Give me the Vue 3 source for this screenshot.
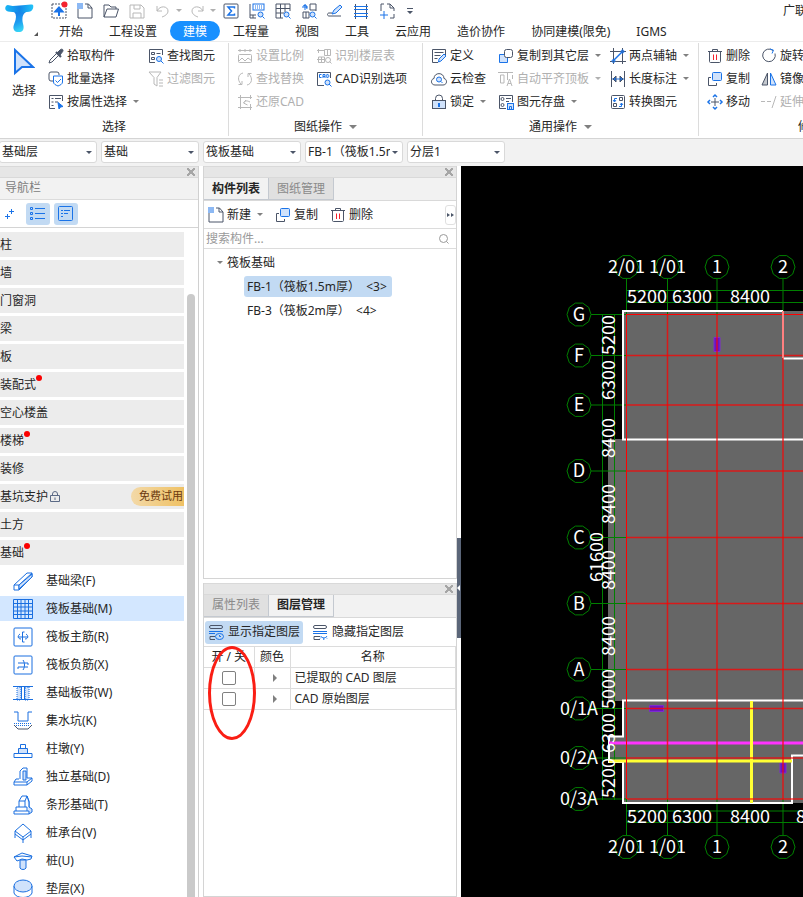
<script setup>
import { ref } from 'vue';

const D = '#4b5568';
const B = '#1a73e8';
const L = '#d0e2fb';

// 16 x 16 icons, stroked with the current colour unless a shape says otherwise
const icons = {
  upload: `<rect x="1" y="1" width="14" height="14" stroke-dasharray="2 1"/><path d="M8 13V6M4.500 8.500 8 4.500l3.500 4z" stroke="${B}" stroke-width="2" fill="${B}"/><circle cx="13.500" cy="1.500" r="3" fill="#f5222d" stroke="none"/>`,
  newFile: `<path d="M1 6v9h14V5l-3.500-4H8M11 1v4h4"/><path d="M.500 1h5M.500 3h5M.500 5h5" stroke="${B}" stroke-dasharray="1 1" stroke-width="2"/>`,
  open: `<path d="M1 14V2h5l2 2h5v2M1 14l3-8h11.500l-2.500 8z"/>`,
  save: `<path d="M1 15V2h11l3 3v10zM4 15v-5h8v5M5 2v4h6V2"/>`,
  undo: `<path d="M2 3v5h5M2 8c3-6 11-5 11 0 0 3-3 5-6 6"/>`,
  redo: `<path d="M14 3v5H9M14 8C11 2 3 3 3 8c0 3 3 5 6 6"/>`,
  sigma: `<rect x="1" y="1" width="14" height="14" rx="1"/><path d="M11.500 5.500V4H5l3.500 4L5 12h6.500v-1.500" stroke="${B}" stroke-width="1.500"/>`,
  lookupA: `<path d="M1 1v14h6M1 12h6M4 12v3"/><rect x="4" y="1" width="11" height="6" stroke="${B}"/><path d="M6 3h8M6 5h8" stroke="${B}" stroke-dasharray="1 1"/><circle cx="11.500" cy="11.500" r="2.500" stroke="${B}" fill="${L}"/><path d="m13.500 13.500 2 2" stroke="${B}"/>`,
  lookupB: `<path d="M1 1h14v7M1 1v14h7M1 5.500h14M1 10h8M5.500 1v14M10 1v8"/><circle cx="11.500" cy="11.500" r="2.500" stroke="${B}" fill="${L}"/><path d="m13.500 13.500 2 2" stroke="${B}"/>`,
  lookupC: `<path d="M9 1h6v7M9 1v6h6M2 9v6h6V9zM5 9v6"/><path d="M1 4h6M4 1v6M2 3l3-1 1 4" stroke="${B}"/><circle cx="11.500" cy="11.500" r="2.500" stroke="${B}" fill="${L}"/><path d="m13.500 13.500 2 2" stroke="${B}"/>`,
  pen: `<path d="M5 11 7 7l6-5 2 2-6 6z" stroke="${B}" fill="${L}"/><path d="M5 10H2c-2 0-2 3 0 3h12"/>`,
  beams: `<path d="M2.500 1v15M13.500 1v15"/><path d="M1 3.500h14M1 6.500h14M1 10.500h14M1 13.500h14" stroke="${B}"/>`,
  addFrame: `<path d="M2 8V1h3M8 1h3l4 4v3M15 11v4h-4M11 1v4h4"/><path d="M1 12h8M5 8v8" stroke="${B}"/>`,
  dropper: `<path d="m9 5 3-3c2-2 4 0 2.500 1.800L12 7" fill="${D}"/><path d="m8 4 5 5" stroke-width="2.200"/><path d="M9 5 2 12l-1 3 3-1 7-7"/>`,
  batch: `<path d="M5 10H3a2 2 0 0 1-2-2V3a2 2 0 0 1 2-2h6a2 2 0 0 1 2 2v1"/><path d="M5.500 5h9v6c0 2-2 3-4.500 4-2.500-1-4.500-2-4.500-4z" stroke="${B}" fill="#fff"/><path d="m7.500 9.500 2 2 3.500-3.500" stroke="${B}"/>`,
  byProp: `<path d="M7 14.500H1.500v-13h13V7"/><path d="M3.500 4.500h2M7 4.500h6M3.500 8h2M7 8h3M3.500 11.500h2"/><path d="m10 8.500 5 4-2.500.500-1.500 2z" fill="${B}" stroke="${B}"/>`,
  find: `<path d="M7 14.500H1.500v-13h13V7M3.500 4.500h3v2h-3zM3.500 9.500h3v2h-3zM8.500 5.500h4"/><circle cx="11" cy="11" r="2.500" stroke="${B}" fill="${L}"/><path d="m13 13 2.500 2.500" stroke="${B}"/>`,
  filter: `<path d="M1 1h12L9 6.500V15l-3-2V6.500zM11 9h4M11 12h4M11 15h4"/>`,
  ratio: `<path d="M1 2.500h14M3 1v3M13 1v3M8 1v3"/><rect x="1.500" y="6.500" width="13" height="8" rx="1"/><path d="m2 13 3-3 3 3 3-3 4 3"/>`,
  replace: `<path d="M6 2C1 3 0 9 4 13M1.500 13.500H5V10M10 14c5-1 6-7 2-11M14.500 2.500H11V6"/>`,
  restore: `<path d="M3.500 1v14M1 3.500h14M1 13.500h14M13.500 10v6M13.500 1v4M13 8C9 6 8 7 7 8.500M9 6 6.500 9l4 2"/>`,
  floorTable: `<path d="M2.500 1v4M1 2.500h7M2.500 9v5.500h6V9zM1 11.500h8M5.500 9v5M8.500 1.500v6h6v-6zM11.500 1v6"/><circle cx="12" cy="12" r="2.500"/><path d="m13.500 13.500 2 2"/>`,
  cadOpt: `<path d="M8 14.500H1.500v-13h13V7"/><path d="M5.500 3.500H3.500v3h2M7 7V3.500h2v3.500M7 5.500h2M10.800 3.500v3h1l1.200-1v-1l-1.200-1z" stroke="${B}"/><circle cx="11.500" cy="11.500" r="2.500" stroke="${B}" fill="${L}"/><path d="m13 13 2.500 2.500" stroke="${B}"/>`,
  define: `<path d="M14.500 7V1.500h-13v13H7M3.500 4.500h9M3.500 7.500h6M3.500 10.500h3"/><path d="m7.500 14 .500-3 5-5 2 2-5 5z" stroke="${B}" fill="${L}"/>`,
  cloud: `<path d="M4 14C-.500 14-.500 8 3 7.500 3 1 13 1 13 7.500c3.500.500 3.500 6.500-1 6.500z"/><circle cx="8" cy="8.500" r="2.500" stroke="${B}" fill="${L}"/><path d="m10 10.500 1.500 1.500" stroke="${B}"/>`,
  lock: `<path d="M4.500 6.500v-2a3.500 3.500 0 0 1 7 0v2"/><rect x="1.500" y="6.500" width="13" height="8" fill="${L}"/><path d="M8 9v4" stroke="${B}" stroke-width="2"/>`,
  copyTo: `<path d="M6 6.500H1.500v8h8V10" stroke="${B}" fill="${L}"/><rect x="6.500" y="1.500" width="8" height="8" rx="2" fill="#fff"/>`,
  align: `<path d="M0 1.500h15M2.500 4v8H6V4zM9.500 1.500V9M9 15l2.500-7 2.500 7M10 12.500h3M14.500 4v4"/>`,
  store: `<path d="M8 14.500H1.500v-13h13V8"/><circle cx="4.500" cy="5" r="1.500"/><circle cx="4.500" cy="11" r="1.500"/><path d="M8 4.500h5M8 7.500h3"/><rect x="9.500" y="9.500" width="6" height="6" stroke="${B}" fill="${L}"/><path d="M11.500 15v-2.500h2V15" stroke="${B}"/>`,
  twoPoint: `<path d="M3.500 0v16M12.500 0v16M0 3.500h16M0 13.500h16"/><path d="M3 13 13 3" stroke="${B}" stroke-width="1.500"/><circle cx="3.500" cy="13" r="1.500" stroke="${B}"/><circle cx="12.500" cy="3.500" r="1.500" stroke="${B}"/>`,
  length: `<path d="M1.500 0v16M14.500 0v16"/><path d="M2 8h12" stroke="${B}"/><path d="M6 5 3 8l3 3zM10 5l3 3-3 3z" fill="${B}"/>`,
  convert: `<rect x="1.500" y="1.500" width="13" height="13" rx="1"/><path d="M9.500 3.500h3v3h-3zM3.500 9.500h3v3h-3z"/><path d="M7 4.500H4.500v3M3 6l1.500 2L6 6M9 12.500h2.500V9M10 11l1.500-2 1.500 2" stroke="${B}"/>`,
  trash: `<path d="M1 3.500h14M5.500 3.500v-2h5v2M2.500 3.500v10c0 .600.400 1 1 1h9c.600 0 1-.400 1-1v-10"/><path d="M6.500 6.500v5.500M9.500 6.500v5.500" stroke="#f5222d"/>`,
  copy: `<path d="M4 6.500H1.500v8h8V12"/><rect x="5.500" y="1.500" width="9" height="8" rx="1" stroke="${B}" fill="${L}"/>`,
  move: `<path d="M8 4v8M4 8h8"/><path d="M6 3l2-2 2 2M6 13l2 2 2-2M3 6 1 8l2 2M13 6l2 2-2 2" stroke="${B}" stroke-width="1.500"/>`,
  rotate: `<path d="M12 2.500a6.300 6.300 0 1 0 2 3"/><path d="m9 1 3.500 1.200L11 5.500" stroke="${B}"/>`,
  mirror: `<path d="M6.500 2v12H1z" fill="#c4c8ce"/><path d="M9.500 2v12H15z" stroke="${B}" fill="${L}"/>`,
  extend: `<path d="M0 7.500h4M6 7.500h4M11 14l4-12"/>`,
  showLayer: `<rect x="1.500" y="1.500" width="13" height="3" rx="1.500"/><path d="M1 7.500h14M1 9.500h6" stroke="${B}"/><path d="M7 12.500H2v3h5"/><ellipse cx="11.500" cy="12.500" rx="4" ry="3" stroke="${B}"/><path d="M11.500 11v1.500H13" stroke="${B}"/>`,
  hideLayer: `<rect x="1.500" y="1.500" width="13" height="3" rx="1.500"/><path d="M1 7.500h14M1 9.500h14" stroke="${B}"/><path d="M8 12.500H2v3h6"/><path d="M8.500 12c2 2.500 5 2.500 6.500 0M9 13.500l-1 1M11.800 14v2M14 13.500l1 1" stroke="${B}"/>`
};

// 20 x 20 drawings for the component types
const shapes = {
  beam: `<path d="M1 14 14 2h5v4L6 19H1zM1 14h5v5M6 14 19 2"/><path d="M6 14 19 3v3L6 18z" fill="${L}"/>`,
  raft: `<path d="M.500.500h19v19H.500zM0 4.500h20M0 8h20M0 12h20M0 15.500h20M4.500 0v20M8 0v20M12 0v20M15.500 0v20"/>`,
  mainBar: `<rect x="1" y="1" width="18" height="18" rx="1"/><path d="M11.500 5h-2v10h2M5 10h10M7 7c-3 2-2 5 1 5M13 7c3 2 2 5-1 5"/>`,
  negBar: `<rect x="1" y="1" width="18" height="18" rx="1"/><path d="M5 8h10v2M5 12h10M5 12v2M10 5c2 3 2 7 0 10"/>`,
  band: `<path d="M4 4h4v13H4zM12 4h4v13h-4z" fill="${L}" stroke-dasharray="1 1"/><path d="M0 3.500h20M0 16.500h20M8.500 3v14M11.500 3v14"/>`,
  sump: `<path d="M1 1h4v9h10V1h4"/><path d="M1 12.500h18M3 14.500h14" stroke-dasharray="1 1"/><path d="m1 14 4 4h10l4-4" stroke="${D}"/>`,
  pier: `<path d="M1 14.500h18v4H1z"/><path d="M5.500 9.500h9v5h-9z" fill="${L}"/><path d="M7.500 5.500h5v4h-5z"/>`,
  isolated: `<path d="M7 12V4l3-3h4v10"/><path d="M10 4h3v9h-3z" fill="${L}"/><path d="M6 12H3l-2 3v3h13l5-4v-3h-5M1 15h13v3M14 15l5-4"/>`,
  strip: `<path d="M6 12V6l3-5h5l2 5v6" /><path d="m14 1 2 6v5l3 2v3l-3 2" fill="${L}"/><path d="M6 6h6v6M12 6l2-5M3 12h11v4M3 12v4M1 16h15v3H1z"/>`,
  cap: `<path d="m2 8 8-7 8 7-8 6z"/><path d="M2 8v7M18 8v7M10 14v6M2 11l8 6 8-6"/>`,
  pile: `<path d="m1 6 8-4 10 3-1 3-4 1-5-1-5 2zM1 6l8-1 10 1"/><path d="M7 9h6v8c-1 2-5 2-6 0z" fill="${L}"/>`,
  cushion: `<path d="M1 7v7c2 6 16 6 18 0V7"/><ellipse cx="10" cy="7" rx="9" ry="6" fill="${L}"/>`
};

const quickTools = [
  { icon: 'upload', label: '上传' },
  { icon: 'newFile', label: '新建' },
  { icon: 'open', label: '打开' },
  { icon: 'save', label: '保存', off: true },
  { icon: 'undo', label: '撤销', off: true, arrow: true },
  { icon: 'redo', label: '恢复', off: true, arrow: true },
  { icon: 'sigma', label: '汇总计算' },
  { icon: 'lookupA', label: '查看报表' },
  { icon: 'lookupB', label: '查看工程量' },
  { icon: 'lookupC', label: '查看计算式' },
  { icon: 'pen', label: '编辑' },
  { icon: 'beams', label: '查看钢筋' },
  { icon: 'addFrame', label: '添加' }
];

const menus = ['开始', '工程设置', '建模', '工程量', '视图', '工具', '云应用', '造价协作', '协同建模(限免)', 'IGMS'];
const activeMenu = ref('建模');

// columns of each ribbon group, top to bottom
const groups = [
  {
    name: 'pick', title: '选择', big: true,
    columns: [
      [{ icon: 'dropper', text: '拾取构件' }, { icon: 'batch', text: '批量选择' }, { icon: 'byProp', text: '按属性选择', arrow: true }],
      [{ icon: 'find', text: '查找图元' }, { icon: 'filter', text: '过滤图元', off: true }]
    ]
  },
  {
    name: 'drawing', title: '图纸操作', arrow: true,
    columns: [
      [{ icon: 'ratio', text: '设置比例', off: true }, { icon: 'replace', text: '查找替换', off: true }, { icon: 'restore', text: '还原CAD', off: true }],
      [{ icon: 'floorTable', text: '识别楼层表', off: true }, { icon: 'cadOpt', text: 'CAD识别选项' }]
    ]
  },
  {
    name: 'common', title: '通用操作', arrow: true,
    columns: [
      [{ icon: 'define', text: '定义' }, { icon: 'cloud', text: '云检查' }, { icon: 'lock', text: '锁定', arrow: true }],
      [{ icon: 'copyTo', text: '复制到其它层', arrow: true }, { icon: 'align', text: '自动平齐顶板', arrow: true, off: true }, { icon: 'store', text: '图元存盘', arrow: true }],
      [{ icon: 'twoPoint', text: '两点辅轴', arrow: true }, { icon: 'length', text: '长度标注', arrow: true }, { icon: 'convert', text: '转换图元' }]
    ]
  },
  {
    name: 'modify', title: '修改',
    columns: [
      [{ icon: 'trash', text: '删除' }, { icon: 'copy', text: '复制' }, { icon: 'move', text: '移动' }],
      [{ icon: 'rotate', text: '旋转' }, { icon: 'mirror', text: '镜像' }, { icon: 'extend', text: '延伸', off: true }]
    ]
  }
];

const selects = [
  { label: '楼层', value: '基础层' },
  { label: '构件分类', value: '基础' },
  { label: '构件类型', value: '筏板基础' },
  { label: '构件', value: 'FB-1（筏板1.5m厚）' },
  { label: '分层', value: '分层1' }
];

const categories = [
  { text: '柱' },
  { text: '墙' },
  { text: '门窗洞' },
  { text: '梁' },
  { text: '板' },
  { text: '装配式', dot: true },
  { text: '空心楼盖' },
  { text: '楼梯', dot: true },
  { text: '装修' },
  { text: '基坑支护', trial: true },
  { text: '土方' },
  { text: '基础', dot: true }
];

const types = [
  { shape: 'beam', text: '基础梁(F)' },
  { shape: 'raft', text: '筏板基础(M)' },
  { shape: 'mainBar', text: '筏板主筋(R)' },
  { shape: 'negBar', text: '筏板负筋(X)' },
  { shape: 'band', text: '基础板带(W)' },
  { shape: 'sump', text: '集水坑(K)' },
  { shape: 'pier', text: '柱墩(Y)' },
  { shape: 'isolated', text: '独立基础(D)' },
  { shape: 'strip', text: '条形基础(T)' },
  { shape: 'cap', text: '桩承台(V)' },
  { shape: 'pile', text: '桩(U)' },
  { shape: 'cushion', text: '垫层(X)' }
];
const activeType = ref('raft');

const members = ['FB-1（筏板1.5m厚）\u00a0 <3>', 'FB-3（筏板2m厚）\u00a0 <4>'];
const activeMember = ref(0);
const keyword = ref('');

const layers = ref([
  { name: '已提取的 CAD 图层', on: false },
  { name: 'CAD 原始图层', on: false }
]);

// grid axes of the plan
const xAxes = [
  { name: '2/01', x: 165.5 },
  { name: '1/01', x: 206.5 },
  { name: '1', x: 256 },
  { name: '2', x: 322 }
];
const yAxes = [
  { name: 'G', y: 148.5 },
  { name: 'F', y: 189.5 },
  { name: 'E', y: 239 },
  { name: 'D', y: 305 },
  { name: 'C', y: 371.5 },
  { name: 'B', y: 437.5 },
  { name: 'A', y: 503.5 },
  { name: '0/1A', y: 542.5 },
  { name: '0/2A', y: 592 },
  { name: '0/3A', y: 633 }
];
const xDims = [
  { text: '5200', x: 186 },
  { text: '6300', x: 231 },
  { text: '8400', x: 289 }
];
const yDims = [
  { text: '5200', y: 169 },
  { text: '6300', y: 214 },
  { text: '8400', y: 272 },
  { text: '8400', y: 338 },
  { text: '8400', y: 404 },
  { text: '8400', y: 470 },
  { text: '5000', y: 523 },
  { text: '6300', y: 567 },
  { text: '5200', y: 612 }
];

const bubble = (cx, cy) => {
  const points = [];
  for (let i = 0; i < 10; i++) {
    const a = (Math.PI / 5) * i;
    points.push(`${(cx + 12 * Math.cos(a)).toFixed(1)},${(cy + 12 * Math.sin(a)).toFixed(1)}`);
  }
  return points.join(' ');
};
</script>

<template>
  <div class="app">
    <header class="header">
      <div class="brand">
        <svg class="logo" viewBox="0 0 30 30" aria-hidden="true">
          <defs>
            <linearGradient id="logo-bar" x1="0" x2="1">
              <stop offset="0" stop-color="#19b8f5" />
              <stop offset="0.5" stop-color="#1286e8" />
              <stop offset="1" stop-color="#22c4f8" />
            </linearGradient>
            <linearGradient id="logo-stem" x1="0" y1="0" x2="0.3" y2="1">
              <stop offset="0" stop-color="#1676e4" />
              <stop offset="0.6" stop-color="#1d9cf0" />
              <stop offset="1" stop-color="#35d2f5" />
            </linearGradient>
          </defs>
          <path d="M8 7c3 2 4 5 3 9-1 4-3 7-2 10 1 4 9 4 10 0 1-3-1-6-1-10 0-4 1-6 4-8z" fill="url(#logo-stem)" />
          <path d="M1 2c2-2 4 0 7 0 5 0 9-1 13-1 3 0 6-1 8 0 1 3-1 7-4 7-4 0-5 1-9 1S9 8 5 8C1 8-1 5 1 2z" fill="url(#logo-bar)" />
        </svg>
        <span class="corner"></span>
      </div>
      <div class="head-rows">
        <div class="title-row">
          <div class="quick">
            <template v-for="t in quickTools" :key="t.icon">
              <button class="quick-btn" :class="{ off: t.off }" :aria-label="t.label">
                <svg class="icon" viewBox="0 0 16 16" v-html="icons[t.icon]"></svg>
              </button>
              <span v-if="t.arrow" class="quick-arrow"><i class="arrow pale"></i></span>
            </template>
            <button class="more" aria-label="更多">
              <svg viewBox="0 0 6 6"><path d="M0 0h6v1H0zM0 3h6L3 6z" /></svg>
            </button>
          </div>
          <span class="app-title">广联达</span>
        </div>
        <nav class="menu">
          <button
            v-for="m in menus"
            :key="m"
            class="menu-btn"
            :class="{ active: m === activeMenu }"
            @click="activeMenu = m"
          >{{ m }}</button>
        </nav>
      </div>
    </header>

    <div class="ribbon">
      <section v-for="g in groups" :key="g.name" class="group" :class="g.name">
        <div class="group-body">
          <button v-if="g.big" class="big-btn">
            <svg class="cursor" viewBox="0 0 22 28"><path d="M2 2v23l7-6h11z" /></svg>
            <span>选择</span>
          </button>
          <div v-for="(col, i) in g.columns" :key="i" class="column">
            <button v-for="t in col" :key="t.text" class="tool" :class="{ off: t.off }">
              <svg class="icon" viewBox="0 0 16 16" v-html="icons[t.icon]"></svg>
              <span>{{ t.text }}</span>
              <i v-if="t.arrow" class="arrow"></i>
            </button>
          </div>
        </div>
        <div class="group-title">{{ g.title }}<i v-if="g.arrow" class="arrow large"></i></div>
      </section>
    </div>

    <div class="select-bar">
      <div v-for="s in selects" :key="s.label" class="picker">
        <select :aria-label="s.label">
          <option>{{ s.value }}</option>
        </select>
        <i class="arrow dark"></i>
      </div>
    </div>

    <main class="body">
      <aside class="nav">
        <div class="strip"><button class="close" aria-label="关闭导航栏"></button></div>
        <div class="nav-title">导航栏</div>
        <div class="nav-tools">
          <button class="nav-tool plain" aria-label="展开">
            <svg viewBox="0 0 24 22"><path d="M8 13.500h5M10.500 11v5M12 8.500h5M14.500 6v5" /></svg>
          </button>
          <button class="nav-tool" aria-label="列表">
            <svg viewBox="0 0 24 22"><path d="M9 5.500h10M9 10.500h10M9 15.500h10M4.500 4.500h2v2h-2zM4.500 9.500h2v2h-2zM4.500 14.500h2v2h-2z" /></svg>
          </button>
          <button class="nav-tool" aria-label="分组">
            <svg viewBox="0 0 24 22"><rect x="4.500" y="3.500" width="14" height="14" rx="1" /><path d="M7 7.500h2M10 7.500h6M7 10.500h2M10 10.500h4M7 13.500h2" /></svg>
          </button>
        </div>
        <div class="nav-content">
          <div class="nav-list">
            <button v-for="c in categories" :key="c.text" class="category">
              <span class="category-name">{{ c.text }}<i v-if="c.dot" class="dot"></i></span>
              <template v-if="c.trial">
                <svg class="mini-lock" viewBox="0 0 10 12"><path d="M2.500 4.500V3a2.500 2.500 0 0 1 5 0v1.500M.500 4.500h9v6h-9zM5 6.500v2.500" /></svg>
                <span class="trial">免费试用</span>
              </template>
            </button>
            <button
              v-for="t in types"
              :key="t.shape"
              class="type"
              :class="{ active: t.shape === activeType }"
              @click="activeType = t.shape"
            >
              <svg class="shape" viewBox="0 0 20 20" v-html="shapes[t.shape]"></svg>
              <span>{{ t.text }}</span>
            </button>
          </div>
          <div class="scroll"><div class="thumb"></div></div>
        </div>
      </aside>

      <div class="middle">
        <section class="panel members">
          <div class="strip"><button class="close" aria-label="关闭构件列表"></button></div>
          <div class="tabs">
            <button class="tab active">构件列表</button>
            <button class="tab">图纸管理</button>
          </div>
          <div class="panel-tools">
            <button class="tool"><svg class="icon" viewBox="0 0 16 16" v-html="icons.newFile"></svg><span>新建</span><i class="arrow"></i></button>
            <button class="tool"><svg class="icon" viewBox="0 0 16 16" v-html="icons.copy"></svg><span>复制</span></button>
            <button class="tool"><svg class="icon" viewBox="0 0 16 16" v-html="icons.trash"></svg><span>删除</span></button>
            <button class="expand" aria-label="更多工具">
              <svg viewBox="0 0 8 6"><path d="M1 1l3 2-3 2zM5 1l3 2-3 2z" /></svg>
            </button>
          </div>
          <div class="search">
            <input v-model="keyword" type="text" placeholder="搜索构件..." aria-label="搜索构件" />
            <svg viewBox="0 0 12 12"><circle cx="5.500" cy="5.500" r="4" /><path d="m8.500 8.500 2 2" /></svg>
          </div>
          <div class="tree">
            <div class="tree-root"><i class="arrow"></i>筏板基础</div>
            <button
              v-for="(m, i) in members"
              :key="m"
              class="leaf"
              :class="{ active: i === activeMember }"
              @click="activeMember = i"
            >{{ m }}</button>
          </div>
        </section>

        <section class="panel layers">
          <div class="strip"><button class="close" aria-label="关闭图层管理"></button></div>
          <div class="tabs">
            <button class="tab">属性列表</button>
            <button class="tab active">图层管理</button>
          </div>
          <div class="layer-tools">
            <button class="tool active"><svg class="icon" viewBox="0 0 16 16" v-html="icons.showLayer"></svg><span>显示指定图层</span></button>
            <button class="tool"><svg class="icon" viewBox="0 0 16 16" v-html="icons.hideLayer"></svg><span>隐藏指定图层</span></button>
          </div>
          <div class="layer-box">
            <table>
              <thead>
                <tr><th class="col-on">开 / 关</th><th class="col-color">颜色</th><th>名称</th></tr>
              </thead>
              <tbody>
                <tr v-for="l in layers" :key="l.name">
                  <td class="center"><input v-model="l.on" type="checkbox" :aria-label="l.name" /></td>
                  <td class="center"><i class="arrow-right"></i></td>
                  <td>{{ l.name }}</td>
                </tr>
              </tbody>
            </table>
            <div class="ring"></div>
          </div>
        </section>
      </div>

      <button class="splitter" aria-label="收起面板"><i></i></button>

      <div class="canvas">
        <svg class="plan">
          <g fill="#666">
            <path d="M161 145h4000v129H161zM147 273h4000v262H147zM161 535h4000v102H161zM148 570h14v27h-14z" />
          </g>
          <g class="green">
            <path d="M165 124.500h4000M165 136.500h4000M165 645h4000M165 656.500h4000M141.500 148v486M153.500 148v486" />
            <template v-for="a in xAxes" :key="a.name">
              <path :d="`M${a.x} 113V148M${a.x} 633V669`" />
              <polygon :points="bubble(a.x, 101)" />
              <polygon :points="bubble(a.x, 681)" />
            </template>
            <template v-for="a in yAxes" :key="a.name">
              <path :d="`M130 ${a.y}H166`" />
              <polygon :points="bubble(118, a.y)" />
            </template>
          </g>
          <g class="outline">
            <path d="M322 145H162V273.500H4000M322 192.500H4000M4000 534.500H162V570.500H148V596H162V637H331V589.500H4000" />
          </g>
          <g fill="#6a14c0" stroke="#7d2bd0">
            <path d="M253 171.500h6v14h-6zM188.500 539.500h14v6h-14zM319 597h6v10h-6z" />
          </g>
          <path d="M148 577H4000" stroke="#ff33ff" stroke-width="3" />
          <path d="M148 595H331M290.500 535V637" stroke="#ffff33" stroke-width="3" />
          <g stroke="#ff0000">
            <path v-for="a in xAxes.slice(1)" :key="a.name" class="grid-line" :d="`M${a.x} 148V633`" />
            <path v-for="a in yAxes.slice(1)" :key="a.name" class="grid-line" :d="`M166 ${a.y}H4000`" />
            <path d="M165.500 148V633M165 148.500H4000" />
          </g>
          <path d="M322 145v47" stroke="#ff8080" stroke-width="2" />
          <g class="labels">
            <template v-for="a in xAxes" :key="a.name">
              <text :x="a.x" y="107">{{ a.name }}</text>
              <text :x="a.x" y="687">{{ a.name }}</text>
            </template>
            <text v-for="a in yAxes" :key="a.name" x="118" :y="a.y + 6">{{ a.name }}</text>
            <template v-for="d in xDims" :key="d.text">
              <text :x="d.x" y="137">{{ d.text }}</text>
              <text :x="d.x" y="657">{{ d.text }}</text>
            </template>
            <text x="355" y="657">8400</text>
            <text v-for="d in yDims" :key="d.y" :transform="`translate(154 ${d.y}) rotate(-90)`">{{ d.text }}</text>
            <text transform="translate(142 391) rotate(-90)">61600</text>
          </g>
        </svg>
      </div>
    </main>
  </div>
</template>

<style>
body {
  margin: 0;
}
</style>

<style scoped>
.app {
  display: flex;
  flex-direction: column;
  height: 100vh;
  overflow: hidden;
  background: #fff;
  color: #262626;
  font-family: "Noto Sans", "Noto Sans CJK SC", sans-serif;
  font-size: 12px;
  line-height: 16px;
}

.app * {
  box-sizing: border-box;
}

button,
input,
select {
  margin: 0;
  padding: 0;
  border: none;
  background: none;
  color: inherit;
  font: inherit;
  white-space: nowrap;
}

.icon {
  flex: none;
  width: 16px;
  height: 16px;
  overflow: visible;
  fill: none;
  stroke: #4b5568;
}

.off {
  color: #b0b0b0;
}

.off .icon {
  stroke: #b8b8b8;
}

.arrow {
  flex: none;
  border: 3px solid transparent;
  border-top-color: #808080;
  border-bottom: none;
}

.arrow.large {
  border-width: 4px;
  border-bottom: none;
}

.arrow.dark {
  border-top-color: #4b5568;
}

.arrow.pale,
.off .arrow {
  border-top-color: #b0b0b0;
}

/* header */
.header {
  display: flex;
  flex: none;
}

.brand {
  display: flex;
  align-items: flex-end;
  width: 46px;
  padding: 3px 6px 5px 5px;
}

.logo {
  width: 29px;
  height: 29px;
  margin-bottom: 3px;
}

.corner {
  width: 0;
  border: 2px solid #555;
  border-top-color: transparent;
  border-left-color: transparent;
}

.head-rows {
  flex: 1;
  min-width: 0;
}

.title-row {
  display: flex;
  justify-content: space-between;
  align-items: center;
  height: 21px;
}

.quick {
  display: flex;
  align-items: center;
}

.quick-btn {
  display: flex;
  justify-content: center;
  width: 26px;
}

.quick-arrow {
  display: flex;
  width: 8px;
}

.more {
  display: flex;
  justify-content: center;
  width: 20px;
}

.more svg {
  width: 6px;
  height: 6px;
  fill: #4b5568;
}

.app-title {
  width: 20px;
  white-space: nowrap;
}

.menu {
  display: flex;
  height: 20px;
}

.menu-btn {
  padding: 1px 13px 0;
  border-radius: 10px;
}

.menu-btn.active {
  background: #1890ff;
  color: #fff;
}

/* ribbon */
.ribbon {
  display: flex;
  flex: none;
  padding: 1px 0 2px;
  border-top: 1px solid #ececec;
  border-bottom: 1px solid #d4d4d4;
}

.group {
  flex: none;
  padding-top: 1px;
  border-right: 1px solid #dcdcdc;
}

.group-body {
  display: grid;
  height: 70px;
}

.pick .group-body {
  grid-template-columns: 48px 100px 80px;
}

.drawing .group-body {
  grid-template-columns: 79px 106px;
  padding-left: 8px;
}

.common .group-body {
  grid-template-columns: 67px 112px 88px;
  padding-left: 8px;
}

.modify .group-body {
  grid-template-columns: 54px 160px;
  padding-left: 8px;
}

.column {
  display: flex;
  flex-direction: column;
}

.tool {
  display: flex;
  align-items: center;
  gap: 3px;
  height: 23px;
}

.tool .arrow {
  margin-left: 3px;
}

.big-btn {
  display: flex;
  flex-direction: column;
  align-items: center;
  gap: 7px;
  padding-top: 4px;
}

.cursor {
  width: 22px;
  height: 28px;
  fill: #d0e2fb;
  stroke: #1a73e8;
  stroke-width: 2;
}

.group-title {
  display: flex;
  align-items: center;
  justify-content: center;
  gap: 7px;
  height: 22px;
  padding-top: 4px;
}

/* selection drop-downs */
.select-bar {
  display: flex;
  flex: none;
  gap: 4px;
  padding: 2px 0 3px;
  margin-left: -1px;
  background: #f2f2f2;
}

.picker {
  position: relative;
  flex: none;
  width: 98px;
}

.picker select {
  display: block;
  width: 100%;
  height: 22px;
  padding: 0 12px 0 2px;
  border: 1px solid #d9d9d9;
  border-radius: 3px;
  background: #fff;
  appearance: none;
}

.picker .arrow {
  position: absolute;
  top: 10px;
  right: 5px;
  pointer-events: none;
}

/* work area */
.body {
  display: flex;
  flex: 1;
  min-height: 0;
}

.strip {
  display: flex;
  flex: none;
  justify-content: flex-end;
  align-items: center;
  height: 12px;
  padding-right: 3px;
  border-top: 1px solid #d9d9d9;
  border-bottom: 1px solid #d9d9d9;
  background: #e6e6e6;
}

.close {
  width: 8px;
  height: 8px;
  background:
    linear-gradient(45deg, transparent 43%, #a6a6a6 43%, #a6a6a6 57%, transparent 57%),
    linear-gradient(-45deg, transparent 43%, #a6a6a6 43%, #a6a6a6 57%, transparent 57%);
}

.nav {
  display: flex;
  flex: none;
  flex-direction: column;
  width: 199px;
  border-right: 1px solid #d0d0d0;
}

.nav-title {
  padding: 2px 5px 3px;
  border-bottom: 1px solid #dcdcdc;
  background: #f2f2f2;
  color: #808080;
}

.nav-tools {
  display: flex;
  flex: none;
  align-items: center;
  gap: 4px;
  height: 28px;
  border-bottom: 1px solid #d4d4d4;
}

.nav-tool {
  width: 24px;
  height: 22px;
  border-radius: 3px;
  background: #c2daf3;
}

.nav-tool.plain {
  width: 22px;
  background: none;
}

.nav-tool svg {
  display: block;
  width: 24px;
  height: 22px;
  margin: 0 auto;
  fill: none;
  stroke: #1a73e8;
}

.nav-tool.plain svg {
  margin-left: -3px;
}

.nav-content {
  display: flex;
  flex: 1;
  min-height: 0;
  padding-top: 4px;
}

.nav-list {
  display: flex;
  flex: 1;
  flex-direction: column;
  gap: 3px;
  overflow: hidden;
}

.category,
.type {
  display: flex;
  flex: none;
  align-items: center;
  height: 25px;
}

.category {
  background: #ececec;
}

.category-name {
  position: relative;
}

.dot {
  position: absolute;
  top: -2px;
  right: -6px;
  width: 6px;
  height: 6px;
  border-radius: 50%;
  background: #fa0000;
}

.mini-lock {
  width: 10px;
  height: 12px;
  margin-left: 2px;
  fill: none;
  stroke: #5b6a86;
}

.trial {
  margin-left: auto;
  padding: 1px 1px 2px 8px;
  border-radius: 10px 0 0 10px;
  background: linear-gradient(to right, #f3d9a8, #efc164);
  color: #6b3a10;
  font-size: 11px;
}

.type {
  gap: 13px;
  padding-left: 13px;
}

.type.active {
  background: #d3e7ff;
}

.shape {
  width: 20px;
  height: 20px;
  fill: none;
  stroke: #1a6fe0;
}

.scroll {
  width: 14px;
  padding: 62px 3px 0;
}

.thumb {
  height: 100%;
  border-radius: 4px 4px 0 0;
  background: #cacaca;
}

/* middle panels */
.middle {
  display: flex;
  flex: none;
  flex-direction: column;
  gap: 4px;
  width: 254px;
  margin-left: 4px;
}

.panel {
  display: flex;
  flex-direction: column;
  border: 1px solid #d4d4d4;
  border-top: none;
}

.members {
  flex: 413;
  min-height: 0;
}

.layers {
  flex: 314;
  min-height: 0;
}

.tabs {
  display: flex;
  flex: none;
  height: 23px;
  border-bottom: 1px solid #d9d9d9;
  background: #f2f2f2;
}

.tab {
  width: 65px;
  border-right: 1px solid #c4c9d0;
  border-bottom: 1px solid #c4c9d0;
  background: #e0e0e0;
  color: #8a8a8a;
}

.tab.active {
  background: #f2f2f2;
  color: #262626;
  font-weight: bold;
}

.panel-tools {
  display: flex;
  flex: none;
  align-items: center;
  gap: 12px;
  height: 28px;
  padding-left: 4px;
  border-bottom: 1px solid #dcdcdc;
}

.expand {
  width: 11px;
  height: 20px;
  margin-left: auto;
  border: 1px solid #e0e0e0;
  border-radius: 3px;
}

.expand svg {
  display: block;
  width: 8px;
  height: 6px;
  fill: #4b5568;
}

.search {
  display: flex;
  flex: none;
  align-items: center;
  height: 20px;
  padding: 0 6px 0 2px;
  border-bottom: 1px solid #dcdcdc;
}

.search input {
  flex: 1;
  min-width: 0;
  outline: none;
}

.search input::placeholder {
  color: #9a9a9a;
}

.search svg {
  width: 12px;
  height: 12px;
  fill: none;
  stroke: #9a9a9a;
}

.tree {
  display: flex;
  flex-direction: column;
  align-items: flex-start;
  gap: 3px;
  padding: 3px 0 0 40px;
}

.tree-root {
  display: flex;
  align-items: center;
  gap: 4px;
  height: 21px;
  margin-left: -27px;
}

.leaf {
  height: 21px;
  padding: 0 5px 0 3px;
  border-radius: 3px;
}

.leaf.active {
  background: #c2daf3;
}

.layer-tools {
  display: flex;
  flex: none;
  gap: 6px;
  padding: 3px 1px 2px;
}

.layer-tools .tool {
  gap: 4px;
  padding: 0 3px;
  border-radius: 3px;
}

.layer-tools .tool.active {
  background: #c2daf3;
}

.layer-box {
  position: relative;
}

table {
  width: 100%;
  border-collapse: collapse;
  table-layout: fixed;
}

th,
td {
  height: 21px;
  padding: 0 4px;
  border: 1px solid #dcdcdc;
  font-weight: normal;
}

th:first-child,
td:first-child {
  border-left: none;
}

th {
  padding: 0;
}

.col-on {
  width: 50px;
}

.col-color {
  width: 36px;
}

.center {
  text-align: center;
}

.center input {
  display: block;
  width: 14px;
  height: 14px;
  margin: 0 auto;
  border: 1px solid #808080;
  border-radius: 2px;
  background: #fff;
  appearance: none;
}

.center input:checked {
  background: #1890ff;
}

.arrow-right {
  display: inline-block;
  margin-left: 6px;
  border: 4px solid transparent;
  border-left-color: #808080;
  border-right: none;
}

.ring {
  position: absolute;
  top: 0;
  left: 4px;
  width: 48px;
  height: 94px;
  border: 3px solid #fa1e14;
  border-radius: 50%;
  pointer-events: none;
}

/* plan */
.splitter {
  display: flex;
  flex: none;
  align-items: center;
  align-self: center;
  width: 4px;
  height: 100px;
  margin-top: 113px;
  background: #5b6679;
}

.splitter i {
  border: 3px solid transparent;
  border-right-color: #fff;
  border-left: none;
}

.canvas {
  flex: 1;
  min-width: 0;
  background: #000;
}

.plan {
  display: block;
  width: 100%;
  height: 100%;
  fill: none;
}

.green {
  stroke: #008000;
}

.outline {
  stroke: #fff;
  stroke-width: 2;
}

.grid-line {
  stroke-width: 1.500;
  opacity: 0.750;
}

.labels {
  fill: #fff;
  font-family: "Noto Sans CJK SC", sans-serif;
  font-size: 18px;
  text-anchor: middle;
}
</style>
